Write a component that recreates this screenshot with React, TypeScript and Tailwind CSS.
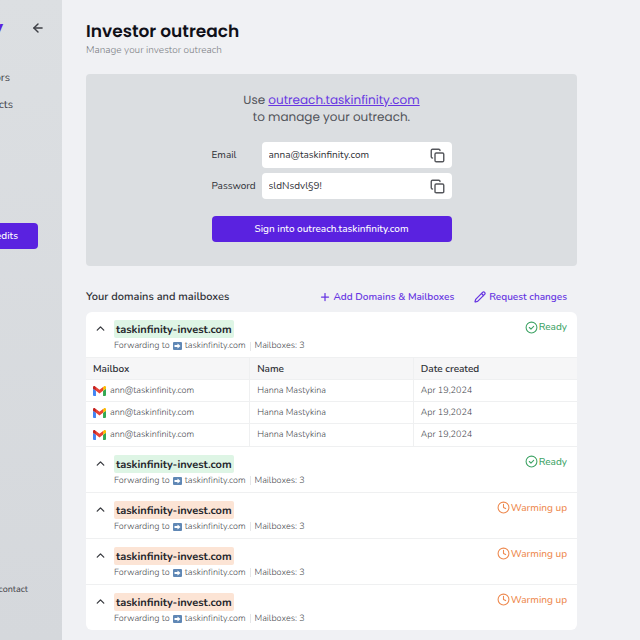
import React from "react";
import { ArrowLeft, ChevronUp, Copy, Plus, Pencil, Clock } from "lucide-react";

function Gmail() {
  return (
    <svg viewBox="52 42 88 66" className="h-[10px] w-[13px] shrink-0" aria-hidden="true">
      <path fill="#4285f4" d="M58 108h14V74L52 59v43c0 3.32 2.69 6 6 6" />
      <path fill="#34a853" d="M120 108h14c3.32 0 6-2.69 6-6V59l-20 15" />
      <path fill="#fbbc04" d="M120 48v26l20-15v-8c0-7.42-8.47-11.65-14.4-7.2" />
      <path fill="#ea4335" d="M72 74V48l24 18 24-18v26L96 92" />
      <path fill="#c5221f" d="M52 51v8l20 15V48l-5.6-4.2c-5.94-4.45-14.4-.22-14.4 7.2" />
    </svg>
  );
}

function ForwardIcon() {
  return (
    <svg viewBox="0 0 18 16" className="h-2 w-[9px] shrink-0" aria-hidden="true">
      <rect width="18" height="16" rx="2" fill="#5f87b5" />
      <path d="M3 6h6V3l6 5-6 5v-3H3z" fill="#fff" />
    </svg>
  );
}

function ReadyIcon() {
  return (
    <svg viewBox="0 0 24 24" className="size-[13px]" fill="none" stroke="currentColor" strokeWidth="2" strokeLinecap="round" strokeLinejoin="round" aria-hidden="true">
      <circle cx="12" cy="12" r="10" />
      <path d="m8 12 3 3 5-5" />
    </svg>
  );
}

function Field({ id, label, value }: { id: string; label: string; value: string }) {
  return (
    <div className="flex items-center">
      <label htmlFor={id} className="w-[50px] shrink-0 text-[10px] text-[#2e3036]">{label}</label>
      <div className="flex h-[26px] min-w-0 flex-1 items-center rounded-[4px] bg-white px-[7px]">
        <input id={id} readOnly defaultValue={value} className="min-w-0 flex-1 bg-transparent text-[10px] text-[#2e3036] outline-none" />
        <button aria-label={`Copy ${label.toLowerCase()}`} className="text-[#55575c]">
          <Copy className="size-[15px]" strokeWidth={2.25} />
        </button>
      </div>
    </div>
  );
}

function Domain({ ready, children }: { ready?: boolean; children?: React.ReactNode }) {
  return (
    <li className="border-b border-[#eff0f1] last:border-b-0">
      <div className="flex min-h-[45px] items-start pt-2 pr-[10px] pl-2">
        <button aria-label="Toggle mailboxes" className="mt-[2px] text-[#3b3d42]">
          <ChevronUp className="size-[13px]" strokeWidth={2.5} />
        </button>
        <div className="ml-[7px] min-w-0">
          <h3 className={`w-fit rounded-[2px] px-[2px] pt-px text-[11px] leading-[17px] font-bold text-[#25262c] ${ready ? "bg-[#def5e5]" : "bg-[#fce4d5]"}`}>
            taskinfinity-invest.com
          </h3>
          <p className="mt-[2px] flex items-center text-[9px] leading-3 font-light text-[#45474d]">
            Forwarding to
            <span className="mx-[3px] flex"><ForwardIcon /></span>
            taskinfinity.com
            <span className="mx-[4px] h-[9px] w-px bg-[#e5e6e8]" />
            Mailboxes: 3
          </p>
        </div>
        <div className={`ml-auto flex items-center gap-px text-[10px] leading-[14px] font-medium ${ready ? "text-[#41a467]" : "text-[#ee8a50]"}`}>
          {ready ? <ReadyIcon /> : <Clock className="size-[13px]" strokeWidth={2} />}
          {ready ? "Ready" : "Warming up"}
        </div>
      </div>
      {children}
    </li>
  );
}

function Mailboxes() {
  return (
    <table className="w-full table-fixed border-collapse text-left text-[9px] leading-3 font-light text-[#45474d]">
      <thead>
        <tr className="h-[22px] border-t border-[#eff0f1] bg-[#f6f6f7] text-[10px] text-[#2e3036]">
          <th className="border-r border-[#eff0f1] px-[7px] font-semibold">Mailbox</th>
          <th className="border-r border-[#eff0f1] px-[7px] font-semibold">Name</th>
          <th className="px-[7px] font-semibold">Date created</th>
        </tr>
      </thead>
      <tbody>
        {[1, 2, 3].map((n) => (
          <tr key={n} className="h-[22px] border-t border-[#eff0f1]">
            <td className="border-r border-[#eff0f1] px-[7px]">
              <span className="flex items-center gap-[4px]"><Gmail />ann@taskinfinity.com</span>
            </td>
            <td className="border-r border-[#eff0f1] px-[7px]">Hanna Mastykina</td>
            <td className="px-[7px]">Apr 19,2024</td>
          </tr>
        ))}
      </tbody>
    </table>
  );
}

export default function App() {
  return (
    <div className="flex min-h-screen bg-[#f0f1f4] font-['Nunito','Lato',sans-serif] [text-rendering:geometricPrecision]">
      <aside className="flex w-[62px] shrink-0 flex-col overflow-hidden bg-linear-to-b from-[#dcdfe2] to-[#d5d8dc] text-[#3e4046]">
        <div className="flex h-14 items-center justify-between pr-[17px]">
          <span className="flex w-[3px] justify-end font-['Poppins','Inter',sans-serif] text-[16px] font-bold text-[#5a22e0]">y</span>
          <button aria-label="Collapse menu"><ArrowLeft className="size-[14px]" strokeWidth={2.5} /></button>
        </div>
        <nav className="mt-2 flex flex-col text-[11px] leading-[27px]">
          <a href="#investors" className="flex w-[10px] justify-end">ors</a>
          <a href="#prospects" className="flex w-[13px] justify-end">cts</a>
        </nav>
        <button className="mt-[105px] flex h-[26px] w-[38px] shrink-0 items-center justify-end rounded-r-[4px] bg-[#5a22e0] pr-5 text-[10px] font-medium text-white">edits</button>
        <a href="#contact" className="mt-auto mb-[43px] flex w-7 justify-end text-[9px] leading-[14px]">contact</a>
      </aside>

      <main className="min-w-0 flex-1 pt-5 pr-[63px] pb-[10px] pl-6">
        <h1 className="font-['Poppins','Inter',sans-serif] text-[17px] leading-[23px] font-semibold text-[#101018]">Investor outreach</h1>
        <p className="pt-px text-[10px] leading-3 font-light text-[#7c7e84]">Manage your investor outreach</p>

        <section className="mt-[18px] flex flex-col items-center rounded-[4px] bg-[#dbdee1] pt-[18px] pb-6">
          <p className="text-center font-['Poppins','Inter',sans-serif] text-[12px] leading-[17px] text-[#515359]">
            Use <a href="#outreach" className="text-[#6736e2] underline">outreach.taskinfinity.com</a>
            <br />
            to manage your outreach.
          </p>
          <form className="mt-4 flex w-60 flex-col" onSubmit={(e) => e.preventDefault()}>
            <div className="flex flex-col gap-[5px]">
              <Field id="email" label="Email" value="anna@taskinfinity.com" />
              <Field id="password" label="Password" value="sldNsdvl§9!" />
            </div>
            <button className="mt-[17px] h-[26px] rounded-[4px] bg-[#5a22e0] text-[10px] font-medium text-white">Sign into outreach.taskinfinity.com</button>
          </form>
        </section>

        <div className="mt-[23px] flex items-center leading-4">
          <h2 className="text-[11px] font-semibold text-[#2e3036]">Your domains and mailboxes</h2>
          <div className="ml-auto flex gap-5 pr-[10px] text-[10px] font-semibold text-[#6736e2]">
            <button className="flex items-center gap-[3px]"><Plus className="size-3" strokeWidth={2.5} />Add Domains &amp; Mailboxes</button>
            <button className="flex items-center gap-[3px]"><Pencil className="size-3" strokeWidth={2.5} />Request changes</button>
          </div>
        </div>

        <ul className="mt-[7px] overflow-hidden rounded-[6px] bg-white">
          <Domain ready><Mailboxes /></Domain>
          <Domain ready />
          <Domain />
          <Domain />
          <Domain />
        </ul>
      </main>
    </div>
  );
}
